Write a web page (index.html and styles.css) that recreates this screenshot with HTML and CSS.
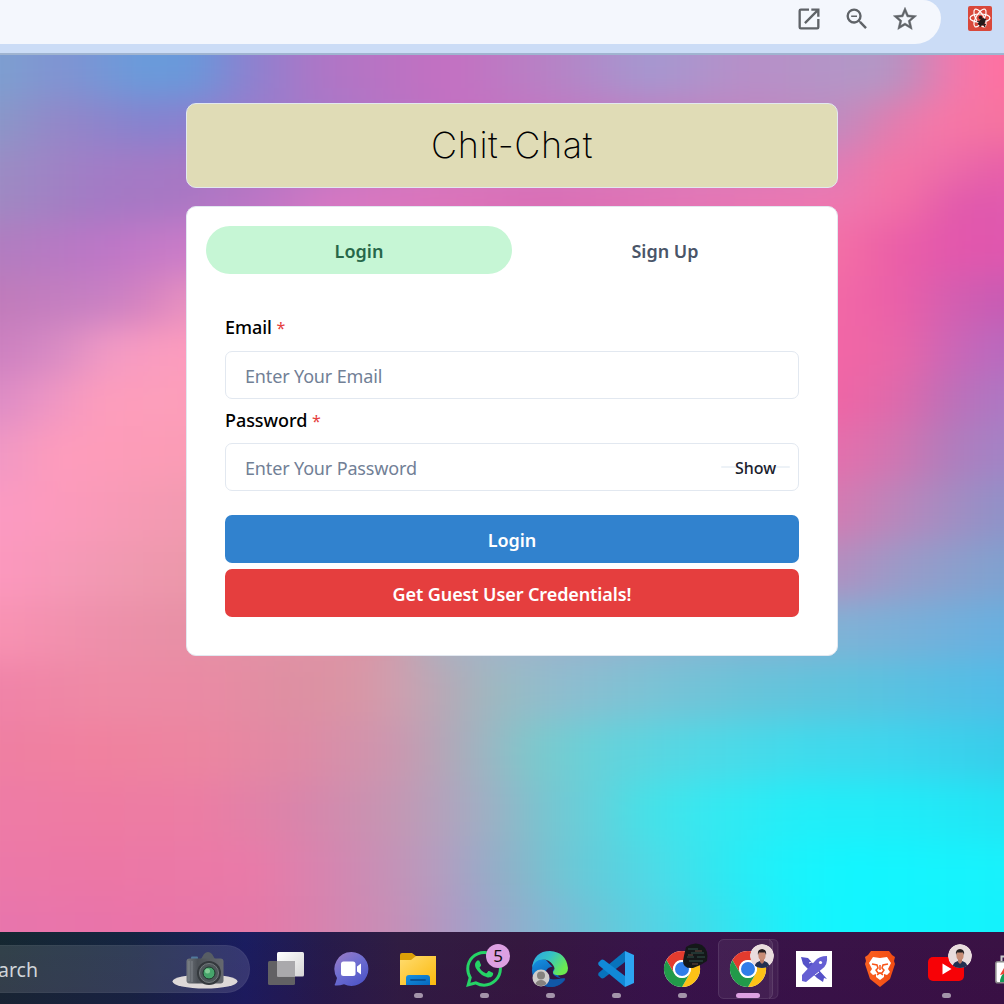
FILE: index.html
```html
<!DOCTYPE html>
<html lang="en">
<head>
<meta charset="utf-8">
<title>Chit-Chat</title>
<link rel="stylesheet" href="styles.css">
</head>
<body>
<div class="screen">
  <header class="toolbar">
    <div class="omnibox">
      <svg class="tool" viewBox="0 0 24 24"><path d="M19 19H5V5h7V3H5a2 2 0 0 0-2 2v14a2 2 0 0 0 2 2h14a2 2 0 0 0 2-2v-7h-2v7zM14 3v2h3.6l-9.8 9.8 1.4 1.4L19 6.4V10h2V3h-7z"/></svg>
      <svg class="tool" viewBox="0 0 24 24"><path d="M15.5 14h-.79l-.28-.27A6.47 6.47 0 0 0 16 9.5 6.5 6.5 0 1 0 9.5 16c1.61 0 3.09-.59 4.23-1.57l.27.28v.79l5 4.99L20.49 19l-4.99-5zm-6 0a4.5 4.5 0 1 1 0-9 4.5 4.5 0 0 1 0 9zM7 9h5v1.2H7z"/></svg>
      <svg class="tool" viewBox="0 0 24 24"><path d="M22 9.24l-7.19-.62L12 2 9.19 8.63 2 9.24l5.46 4.73L5.82 21 12 17.27 18.18 21l-1.63-7.03L22 9.24zM12 15.4l-3.76 2.27 1-4.28-3.32-2.88 4.38-.38L12 6.1l1.71 4.04 4.38.38-3.32 2.88 1 4.28L12 15.4z" stroke="#5f6368" stroke-width=".4"/></svg>
    </div>
    <svg class="extension" viewBox="0 0 24 25"><rect width="24" height="25" rx="2" fill="#d9483b"/><g fill="none" stroke="#fff" stroke-width="1.2"><ellipse cx="12" cy="12" rx="10" ry="4"/><ellipse cx="12" cy="12" rx="10" ry="4" transform="rotate(60 12 12)"/><ellipse cx="12" cy="12" rx="10" ry="4" transform="rotate(120 12 12)"/></g><g fill="#241a1a"><ellipse cx="14" cy="16" rx="2.8" ry="4.4" transform="rotate(35 14 16)"/><circle cx="12.5" cy="11.500" r="1.800"/></g><path d="M9 15l9 4M10 18l8-5M12 21l1-5M17 21l-2-4" stroke="#241a1a" stroke-width="1.2"/></svg>
  </header>

  <main class="page">
    <div class="wallpaper">
      <i class="w1"></i><i class="w2"></i><i class="w3"></i><i class="w4"></i><i class="w5"></i><i class="w6"></i><i class="w7"></i><i class="w8"></i><i class="w9"></i><i class="w10"></i><i class="w11"></i><i class="w12"></i><i class="w13"></i><i class="w14"></i><i class="w15"></i><i class="w16"></i><i class="w17"></i>
    </div>
    <div class="container">
      <div class="banner"><h1>Chit-Chat</h1></div>
      <section class="card">
        <div class="tabs">
          <button class="tab active">Login</button>
          <button class="tab">Sign Up</button>
        </div>
        <form class="form">
          <label class="label">Email <span class="star">*</span></label>
          <div class="field"><span>Enter Your Email</span></div>
          <label class="label second">Password <span class="star">*</span></label>
          <div class="field"><span>Enter Your Password</span><span class="show"><span>Show</span></span></div>
          <button type="button" class="btn blue">Login</button>
          <button type="button" class="btn red">Get Guest User Credentials!</button>
        </form>
      </section>
    </div>
  </main>

  <footer class="taskbar">
    <svg width="0" height="0" class="defs">
      <defs>
        <linearGradient id="light" x2="1" y2="1"><stop stop-color="#fff"/><stop offset="1" stop-color="#d5d5d5"/></linearGradient>
        <linearGradient id="chat" x2=".7" y2="1"><stop stop-color="#a07cc4"/><stop offset=".5" stop-color="#6f6ed0"/><stop offset="1" stop-color="#4f55c8"/></linearGradient>
        <linearGradient id="folder" x2="1" y2="1"><stop stop-color="#ffdc70"/><stop offset="1" stop-color="#fbb90c"/></linearGradient>
        <linearGradient id="tray" x2="1" y2="1"><stop stop-color="#1590e0"/><stop offset="1" stop-color="#0668bd"/></linearGradient>
        <linearGradient id="edgetop" x2="1" y2=".5"><stop stop-color="#2aa3e6"/><stop offset=".5" stop-color="#36c3c4"/><stop offset="1" stop-color="#6bea50"/></linearGradient>
        <linearGradient id="edgelow" x2=".5" y2="1"><stop stop-color="#1493e4"/><stop offset="1" stop-color="#0b50a4"/></linearGradient>
        <linearGradient id="brave" x2="1"><stop stop-color="#fb6020"/><stop offset="1" stop-color="#f24c12"/></linearGradient>
        <linearGradient id="body" x2="1"><stop stop-color="#72777d"/><stop offset=".3" stop-color="#4b5056"/><stop offset="1" stop-color="#66696f"/></linearGradient>
        <clipPath id="round"><circle r="12"/></clipPath>
        <clipPath id="bag"><rect x="18" y="31" width="34" height="19"/></clipPath>
        <g id="chrome"><circle r="18" fill="#fff"/><path d="M-15.6-9A18 18 0 0 1 15.6-9H0A9 9 0 0 0-7.8 4.5Z" fill="#e33b2e"/><path d="M15.6-9A18 18 0 0 1 0 18L7.8 4.5A9 9 0 0 0 0-9Z" fill="#fdc116"/><path d="M0 18A18 18 0 0 1-15.6-9L-7.8 4.5A9 9 0 0 0 7.8 4.5Z" fill="#229a4a"/><circle r="8.7" fill="#fff"/><circle r="7" fill="#2f7de9"/></g>
        <g id="person" clip-path="url(#round)"><circle r="12" fill="#e9dcdd"/><path d="M-7 14V9Q-6 6-2 5H2Q6 6 7 9V14Z" fill="#222f50"/><path d="M-2 2H2V6L0 8-2 6Z" fill="#b87965"/><ellipse cy="-.5" rx="3.600" ry="4.500" fill="#c78c75"/><path d="M-4-1Q-5-6.500 0-7 5-6.500 4-1L3-3.500H-3Z" fill="#241d20"/></g>
      </defs>
    </svg>
    <div class="search">
      <span>arch</span>
      <svg class="camera" viewBox="0 0 66 40"><ellipse cx="33" cy="30.5" rx="32.5" ry="7" fill="#ded9d8"/><path d="M29 8l3-5q4-4 8 0l3 5z" fill="#575d64"/><rect x="19" y="5.5" width="7" height="3" rx="1" fill="#51799c"/><rect x="14.500" y="7.500" width="37" height="25" rx="3" fill="url(#body)"/><path d="M17 10v20M20 10v21" stroke="#8c9298" stroke-width=".7"/><circle cx="37" cy="22" r="12" fill="#34393d"/><circle cx="37" cy="22" r="9.500" fill="#4f575a" stroke="#747a7d"/><circle cx="37" cy="22" r="6" fill="#46a56b" stroke="#1d352b"/><circle cx="35.500" cy="20" r="2.500" fill="#82cc95"/></svg>
    </div>
    <svg class="tile" viewBox="0 0 66 72"><rect x="15" y="29" width="27" height="24" rx="1.500" fill="#626164"/><rect x="24" y="20" width="27" height="24.500" rx="1.500" fill="url(#light)"/><path d="M24 29H42V44.500H24Z" fill="#aaa9ac"/></svg>
    <svg class="tile" viewBox="0 0 66 72"><path d="M32.500 20A17 17 0 1 1 25 52.300Q20 54 16 53.500 15 53 16.500 51L18 46A17 17 0 0 1 32.500 20Z" fill="url(#chat)"/><rect x="22" y="29.500" width="14.500" height="14.500" rx="2.500" fill="#fff"/><path d="M38 34.500L42 31.500V42.500L38 39.500Z" fill="#fff"/></svg>
    <svg class="tile" viewBox="0 0 66 72"><path d="M15 23q0-2 2-2h10l4 3h18q2 0 2 2v7H15z" fill="#dda007"/><path d="M15 28H26L31 24H51V53H15Z" fill="url(#folder)"/><path d="M21 53V46Q21 43 24 43H42Q45 43 45 46V53Z" fill="url(#tray)"/><path d="M26 48H40" stroke="#075398" stroke-width="1.800" stroke-linecap="round"/><rect class="pill" x="29" y="61" width="9" height="5" rx="2.500"/></svg>
    <svg class="tile" viewBox="0 0 66 72"><path transform="translate(15 19) scale(1.5)" fill="#25d366" d="M17.472 14.382c-.297-.149-1.758-.867-2.030-.967-.273-.099-.471-.148-.67.15-.197.297-.767.966-.94 1.164-.173.199-.347.223-.644.075-.297-.150-1.255-.463-2.390-1.475-.883-.788-1.480-1.761-1.653-2.059-.173-.297-.018-.458.13-.606.134-.133.298-.347.446-.520.149-.174.198-.298.298-.497.099-.198.050-.371-.025-.520-.075-.149-.669-1.612-.916-2.207-.242-.579-.487-.5-.669-.51-.173-.008-.371-.010-.570-.010-.198 0-.520.074-.792.372-.272.297-1.040 1.016-1.040 2.479 0 1.462 1.065 2.875 1.213 3.074.149.198 2.096 3.200 5.077 4.487.709.306 1.262.489 1.694.625.712.227 1.360.195 1.871.118.571-.085 1.758-.719 2.006-1.413.248-.694.248-1.289.173-1.413-.074-.124-.272-.198-.570-.347M12.050 21.785h-.004a9.870 9.870 0 0 1-5.031-1.378l-.361-.214-3.741.982.998-3.648-.235-.374a9.860 9.860 0 0 1-1.510-5.260c.001-5.450 4.436-9.884 9.888-9.884a9.880 9.880 0 0 1 9.884 9.890c-.003 5.450-4.437 9.886-9.888 9.886m8.413-18.297A11.815 11.815 0 0 0 12.050 0C5.495 0 .160 5.335.157 11.892c0 2.096.547 4.142 1.588 5.945L.057 24l6.305-1.654a11.882 11.882 0 0 0 5.683 1.448h.005c6.554 0 11.890-5.335 11.893-11.893a11.821 11.821 0 0 0-3.480-8.413"/><circle cx="47" cy="24" r="12" fill="#dda0e2"/><text x="47" y="30" class="badge">5</text><rect class="pill" x="29" y="61" width="9" height="5" rx="2.500"/></svg>
    <svg class="tile" viewBox="0 0 66 72"><path d="M15 38Q15 24 29 28L42 42Q39 45 47 47 49 47 48 48 42 56 31 55 15 52 15 38Z" fill="url(#edgelow)"/><path d="M15 36Q17 19 33 19 49 20 51 36 51 42 45 43 36 44 36 40 39 37 36 33 31 26 22 28 17 30 15 36Z" fill="url(#edgetop)"/><path d="M28 42Q29 36 34 35 37 34 37 37 35 39 36 42 39 46 47 47 34 51 28 42Z" fill="#321342"/><path d="M25 43Q28 50 48 46 46 53 35 55 28 54 25 43Z" fill="#1157a7"/><circle cx="24" cy="46" r="8.500" fill="#cfcccb"/><circle cx="24" cy="43.500" r="4" fill="#85817e"/><path d="M18.500 52Q20 48 24 48T29.500 52Q24 56 18.500 52Z" fill="#85817e"/><rect class="pill" x="29" y="61" width="9" height="5" rx="2.500"/></svg>
    <svg class="tile" viewBox="0 0 66 72"><path d="M42 19V30L21 46Q19 47 17.500 45.500L15.500 43.500Q14.500 42 16 40.500Z" fill="#0873bc"/><path d="M42 55V44L21 28Q19 27 17.500 28.500L15.500 30.500Q14.500 32 16 33.500Z" fill="#1189d7"/><path d="M42 19L51 23V51L42 55Z" fill="#2da5f2"/><rect class="pill" x="29" y="61" width="9" height="5" rx="2.500"/></svg>
    <svg class="tile" viewBox="0 0 66 72"><use href="#chrome" x="33" y="37"/><path d="M37 15Q45 9 53 13 60 18 58 29 51 34 44 36 34 37 34 29 35 23 37 15Z" fill="#141819"/><path d="M39 17h10M42 21h13M38 25h7M48 25h8M40 29h14" stroke="#31534d" stroke-width="1.200"/><path d="M46 19h7M39 23h5M43 32h6" stroke="#684c42"/><rect class="pill" x="29" y="61" width="9" height="5" rx="2.500"/></svg>
    <svg class="tile" viewBox="0 0 66 72"><path d="M54 7.500h4q5 0 5 5v48q0 6-5 6h-4" fill="#fff" fill-opacity=".05" stroke="#fff" stroke-opacity=".1"/><rect x="3.500" y="7.500" width="54" height="59" rx="5" fill="#fff" fill-opacity=".06" stroke="#fff" stroke-opacity=".12"/><use href="#chrome" x="33" y="37"/><use href="#person" x="47" y="24"/><rect x="21" y="61" width="24" height="5" rx="2.500" fill="#dda0e2"/></svg>
    <svg class="tile" viewBox="0 0 66 72"><path d="M15 19H51V55H15Z" fill="#fff"/><path d="M20 25L27 26 46 47 43 46 42 50 36 46 22 32Z" fill="#5551c8"/><path d="M46 24Q38 24 34 29L21 43 21 49 25 50 41 37Q47 33 46 24Z" fill="#655fd3"/><path d="M28 31L33 29M34 43L38 40" stroke="#fff" stroke-width="1"/><circle cx="39.500" cy="30.500" r="1.600" fill="#fff"/></svg>
    <svg class="tile" viewBox="0 0 66 72"><path d="M24 19H42L45 23 48 25 47 29 48 32 43 47 33 55 23 47 18 32 19 29 18 25 21 23Z" fill="url(#brave)"/><path d="M26 25L33 26 40 25 44 31 41 37 43 40 40 43 37 42 37 45 33 48 29 45 29 42 26 43 23 40 25 37 22 31Z" fill="#fff"/><path d="M25 32L30 33 31 36 29 38 31 41H35L37 38 35 36 36 33 41 32M33 33V38M30 43L33 41 36 43" fill="none" stroke="#f85619" stroke-width="1.500"/></svg>
    <svg class="tile" viewBox="0 0 66 72"><rect x="15" y="25" width="36" height="24" rx="5" fill="#f70206"/><path d="M29.500 31.500V42.500L38.500 37Z" fill="#fff"/><use href="#person" x="47" y="24"/><rect class="pill" x="29" y="61" width="9" height="5" rx="2.500"/></svg>
    <svg class="tile" viewBox="0 0 66 72"><path d="M22.500 30V24.500H45V30" fill="none" stroke="#c9c9c9" stroke-width="2"/><rect x="16.800" y="29.800" width="34" height="21" rx="2" fill="#fff" stroke="#8b8b8b" stroke-width="1.600"/><g clip-path="url(#bag)"><circle cx="33" cy="50" r="12" fill="#159957"/><path d="M21 43L25 36V42Z" fill="#e94335"/></g></svg>
  </footer>
</div>
</body>
</html>
```
FILE: styles.css
```css
* { box-sizing: border-box; }
body { margin: 0; font-family: "Noto Sans", "Open Sans", sans-serif; }
button { font: inherit; border: 0; padding: 0; }
.screen { width: 1004px; height: 1004px; display: flex; flex-direction: column; overflow: hidden; }

.toolbar { flex: 0 0 55px; background: #cbdcf6; border-bottom: 2px solid #a0b4d0; display: flex; align-items: flex-start; }
.omnibox { width: 941px; height: 44px; background: #f4f7fd; border-radius: 0 18px 26px 0; display: flex; justify-content: flex-end; gap: 20px; padding: 4.5px 22px 0 0; }
.tool { width: 28px; height: 28px; fill: #5f6368; }
.extension { width: 24px; height: 25px; margin: 6px 0 0 27px; }

.page { flex: 1; position: relative; overflow: hidden; }
.wallpaper { position: absolute; inset: -50px -40px; display: flex; flex-direction: column; filter: blur(17px); }
.wallpaper i { flex: 0 0 60px; }
.wallpaper .w1 { flex-basis: 94px; background: linear-gradient(90deg,#7d9fd0 40px,#8193d2 100px,#699bdb 185px,#6a98da 235px,#8a82d0 285px,#ae76c6 360px,#c470c1 490px,#b584c6 600px,#a598d0 690px,#b78fc8 790px,#b298c6 920px,#c08bbd 950px,#f07aae 990px,#ff70a0 1044px); }
.wallpaper .w2 { flex-basis: 47px; background: linear-gradient(90deg,#8a97c8 40px,#9486c8 100px,#8582cf 190px,#8b80cf 226px,#c470c1 500px,#be8cc0 878px,#e07db0 930px,#f678a8 975px,#f5739f 1044px); }
.wallpaper .w3 { flex-basis: 40px; background: linear-gradient(90deg,#9b8cc4 40px,#a27cc6 140px,#a678c4 226px,#d078c0 450px,#df7cb6 878px,#f576a5 930px,#ee6fa8 980px,#e85fa8 1044px); }
.wallpaper .w4 { flex-basis: 37px; background: linear-gradient(90deg,#9f89c2 40px,#a379c4 140px,#a977c4 226px,#bf74c6 310px,#d878c4 370px,#dd72b9 490px,#d96cb5 580px,#e476b6 740px,#ee78b0 878px,#f36fa5 940px,#e058ac 1000px,#e05aae 1044px); }
.wallpaper .w5 { flex-basis: 53px; background: linear-gradient(90deg,#b17dc0 40px,#bc76c6 140px,#ca7cc8 226px,#f470a6 878px,#ed62a6 920px,#e357ac 990px,#df57ae 1044px); }
.wallpaper .w6 { flex-basis: 50px; background: linear-gradient(90deg,#c07bba 40px,#c780c3 140px,#d783c0 190px,#e892c0 226px,#f268a6 878px,#ea5fa8 940px,#d45fb0 990px,#c75bb4 1044px); }
.wallpaper .w7 { flex-basis: 50px; background: linear-gradient(90deg,#cc80c0 40px,#d98cc4 100px,#f39bc4 150px,#fd9cbd 226px,#f266a5 878px,#e866a8 940px,#cc66b6 990px,#b86abf 1044px); }
.wallpaper .w8 { flex-basis: 50px; background: linear-gradient(90deg,#dd8cc5 40px,#ee96c4 90px,#fd9dbc 140px,#fc9eba 226px,#ef65a5 878px,#dd6aac 940px,#bd70b8 990px,#ad78c4 1044px); }
.wallpaper .w9 { flex-basis: 55px; background: linear-gradient(90deg,#f098c4 40px,#fe9cbc 100px,#fb9cb5 226px,#e46fac 878px,#cf76b2 940px,#b07dbc 990px,#a383c6 1044px); }
.w10 { background: linear-gradient(90deg,#fb9ac2 40px,#fc9abc 100px,#f29ab0 226px,#d37bb2 878px,#b887bc 940px,#8f92c8 1044px); }
.w11 { background: linear-gradient(90deg,#fc98be 40px,#f299b3 140px,#ec98aa 226px,#b28fc0 878px,#9a9bc8 940px,#7fa2d0 1044px); }
.w12 { background: linear-gradient(90deg,#f892b3 40px,#ee90ab 140px,#e790a5 226px,#dc94a5 400px,#cc9fae 440px,#aab2c0 480px,#a2b3ca 540px,#98b2cd 640px,#88b4d2 740px,#80b2d6 878px,#76b0da 960px,#68b0e0 1044px); }
.w13 { background: linear-gradient(90deg,#f083a8 40px,#ef8aa5 140px,#ea8aa4 240px,#dd90a2 340px,#d996a6 400px,#cda0b0 440px,#b3abb8 490px,#9bbac2 540px,#8fbdcf 600px,#7bc3d5 690px,#68c4da 790px,#5cc4de 890px,#50bde8 1044px); }
.w14 { background: linear-gradient(90deg,#ef7fa2 40px,#f0819f 140px,#ec85a0 240px,#df8aa5 340px,#ca98b0 440px,#b0a9b9 490px,#93bbc6 540px,#7ec8cb 570px,#66d2da 640px,#50d9e6 740px,#40dbec 840px,#3cd6ee 940px,#38cdea 1044px); }
.w15 { background: linear-gradient(90deg,#ee7ba6 40px,#ee7ba2 140px,#ec7da4 240px,#d985ab 340px,#c398b4 440px,#b0a4be 490px,#97b4c6 540px,#7ac4cf 580px,#62d2dc 640px,#48e0e6 680px,#38e8f0 740px,#22eef8 840px,#20ecf8 940px,#22e4f4 1044px); }
.wallpaper .w16 { flex-basis: 55px; background: linear-gradient(90deg,#ec78a8 40px,#ec77a5 140px,#ea7aa8 290px,#d585b0 370px,#c294b8 440px,#b0a0c2 490px,#a0a6c6 510px,#88b6ca 560px,#70c6d4 600px,#58d2e0 660px,#4bdde8 700px,#2fe8f1 760px,#1cf2fb 820px,#12f6ff 890px,#18f2fc 1044px); }
.wallpaper .w17 { flex-basis: 90px; background: linear-gradient(90deg,#e875ac 40px,#ea74a8 190px,#e37ba9 310px,#c490b8 440px,#a59ec8 510px,#8eb0cc 560px,#7cbad6 600px,#68c6d8 640px,#56d2e4 690px,#40dcea 740px,#30e6f2 780px,#18f2fc 840px,#12f6ff 890px,#14f2fc 1044px); }

.container { position: relative; width: 652px; margin: 48px 0 0 186px; display: flex; flex-direction: column; gap: 18px; }
.banner { height: 85px; background: #e0dcb6; border: 1px solid #e2e8f0; border-radius: 10px; display: flex; align-items: center; justify-content: center; padding-bottom: 2px; }
h1 { margin: 0; font: 200 36px/50px "Inter", sans-serif; letter-spacing: .6px; color: #000; }
.card { height: 450px; background: #fff; border: 1px solid #e2e8f0; border-radius: 10px; padding: 19px; }
.tabs { display: flex; height: 48px; }
.tab { flex: 1; border-radius: 24px; background: none; color: #4a5568; font-size: 18px; font-weight: 600; padding-top: 2px; }
.tab.active { background: #c6f6d5; color: #276749; }
.form { padding: 39px 19px 0; display: flex; flex-direction: column; }
.label { font-size: 18px; line-height: 28px; height: 38px; font-weight: 500; color: #000; letter-spacing: -.05px; }
.label.second { margin-top: 7px; height: 37px; }
.star { color: #e53e3e; font-weight: 400; font-size: 16px; }
.field { height: 48px; border: 1px solid #e2e8f0; border-radius: 7px; padding: 2px 8px 0 19px; display: flex; align-items: center; justify-content: space-between; font-size: 18px; letter-spacing: -.15px; color: #718096; }
.show { width: 69px; height: 2px; margin-top: -2px; background: #edf2f7; border-radius: 1px; display: flex; align-items: center; justify-content: center; font-size: 16px; letter-spacing: 0; font-weight: 500; color: #1a202c; }
.show span { padding-top: 2px; }
.btn { height: 48px; border-radius: 7px; color: #fff; font-size: 18px; font-weight: 600; padding-top: 2px; letter-spacing: -.1px; }
.blue { background: #3182ce; margin-top: 24px; }
.red { background: #e53e3e; margin-top: 6px; }

.taskbar { flex: 0 0 72px; display: flex; overflow: hidden; background: linear-gradient(180deg,transparent,rgba(50,0,70,.12)), linear-gradient(90deg,#152831 0,#152541 130px,#1a1d60 245px,#261b4b 325px,#301d42 400px,#35183f 520px,#38144a 650px,#3a1244 1004px); }
.defs { position: absolute; }
.search { flex: 0 0 250px; height: 48px; margin: 13px 3px 0 0; border-radius: 0 24px 24px 0; background: rgba(255,255,255,.12); border: 1px solid rgba(255,255,255,.04); border-left: 0; display: flex; justify-content: space-between; padding-right: 11px; color: #d0d5d9; font-size: 19.5px; line-height: 47px; }
.search span { margin-left: -2px; }
.camera { width: 66px; height: 40px; margin-top: 5px; }
.tile { flex: 0 0 66px; height: 72px; }
.pill { fill: #a494aa; }
.badge { font: 17px "Noto Sans", sans-serif; text-anchor: middle; fill: #141014; }
```
